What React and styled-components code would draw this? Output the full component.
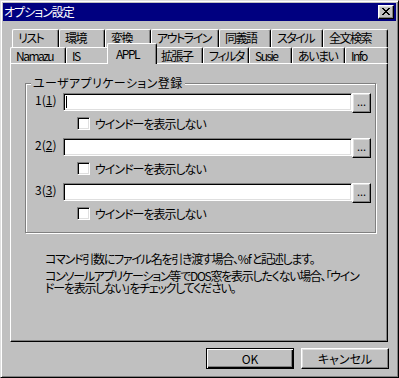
import React from 'react';
import styled, { createGlobalStyle } from 'styled-components';

const GlobalStyle = createGlobalStyle`
  html, body {
    margin: 0;
    padding: 0;
    background: #c0c0c0;
  }
  body {
    font-family: "Noto Sans CJK JP", "Noto Sans", sans-serif;
    font-size: 12px;
    line-height: 13px;
    letter-spacing: -1px;
    color: #000;
    font-feature-settings: "palt";
  }
`;

const Window = styled.div`
  box-sizing: border-box;
  width: 399px;
  height: 378px;
  padding: 2px;
  border: 1px solid;
  border-color: #dfdfdf #000 #000 #dfdfdf;
  box-shadow: inset 1px 1px #fff, inset -1px -1px #808080;
  background: #c0c0c0;
  display: flex;
  flex-direction: column;
`;

const TitleBar = styled.div`
  height: 18px;
  flex: none;
  background: #000080;
  display: flex;
  align-items: center;
  justify-content: space-between;
  padding: 0 2px 0 1px;
`;

const TitleText = styled.span`
  color: #fff;
  line-height: 18px;
`;

const CloseButton = styled.button`
  box-sizing: border-box;
  width: 16px;
  height: 14px;
  padding: 0 0 1px;
  display: flex;
  align-items: center;
  justify-content: center;
  background: #c0c0c0;
  border: 1px solid;
  border-color: #fff #000 #000 #fff;
  box-shadow: inset -1px -1px #808080, inset 1px 1px #dfdfdf;
`;

const Body = styled.div`
  flex: 1;
  display: flex;
  flex-direction: column;
  padding: 8px 8px 0 7px;
`;

const TabRow = styled.div`
  display: flex;
  align-items: flex-end;
  height: ${(p) => p.$h}px;
  margin-left: ${(p) => p.$indent}px;
`;

const Tab = styled.div`
  box-sizing: border-box;
  flex: none;
  position: ${(p) => (p.$active ? 'relative' : 'static')};
  z-index: ${(p) => (p.$active ? 1 : 'auto')};
  width: ${(p) => (p.$active ? p.$w + 4 : p.$w)}px;
  height: ${(p) => (p.$active ? 21 : p.$h)}px;
  margin: ${(p) => (p.$active ? '0 -2px -1px' : '0')};
  padding-left: ${(p) => (p.$active ? 8 : 5)}px;
  padding-bottom: ${(p) => (p.$active ? 2 : p.$lift)}px;
  display: flex;
  align-items: center;
  white-space: nowrap;
  overflow: hidden;
  letter-spacing: -1.5px;
  background: #c0c0c0;
  border-top: 1px solid #fff;
  border-left: 1px solid #fff;
  border-right: 1px solid #000;
  border-radius: 2px 2px 0 0;
  box-shadow: inset -1px 0 #808080;
`;

const Sheet = styled.div`
  box-sizing: border-box;
  height: 279px;
  flex: none;
  border: 1px solid;
  border-color: #fff #000 #000 #fff;
  box-shadow: inset -1px -1px #808080;
  padding: 19px 0 0 14px;
`;

const GroupBox = styled.div`
  position: relative;
  box-sizing: border-box;
  width: 351px;
  border: 1px solid #808080;
  box-shadow: inset 1px 1px #fff, 1px 1px #fff;
  padding: 9px 0 12px 9px;
`;

const GroupCaption = styled.span`
  position: absolute;
  top: -8px;
  left: 5px;
  padding: 0 2px;
  letter-spacing: 0.4px;
  background: #c0c0c0;
`;

const Entry = styled.div`
  & + & {
    margin-top: 8px;
  }
`;

const EntryLine = styled.div`
  display: flex;
  align-items: flex-start;
  height: 20px;
`;

const EntryLabel = styled.span`
  width: 28px;
  flex: none;
  letter-spacing: 0;
`;

const Accel = styled.span`
  text-decoration: underline;
`;

const TextField = styled.div`
  box-sizing: border-box;
  width: 289px;
  height: 18px;
  flex: none;
  display: flex;
  align-items: center;
  padding-left: 1px;
  background: #fff;
  border: 1px solid;
  border-color: #808080 #fff #fff #808080;
  box-shadow: inset 1px 1px #000, inset -1px -1px #dfdfdf;
`;

const Caret = styled.span`
  width: 1px;
  height: 12px;
  margin-left: 1px;
  background: #000;
`;

const BrowseButton = styled.button`
  box-sizing: border-box;
  width: 19px;
  height: 20px;
  flex: none;
  padding: 0 0 4px;
  display: flex;
  align-items: center;
  justify-content: center;
  font: inherit;
  font-size: 11px;
  letter-spacing: 0;
  color: #000;
  background: #c0c0c0;
  border: 1px solid;
  border-color: #fff #000 #000 #fff;
  box-shadow: inset -1px -1px #808080, inset 1px 1px #dfdfdf;
`;

const CheckLine = styled.div`
  display: flex;
  align-items: center;
  gap: 5px;
  margin-top: 4px;
  padding-left: 42px;
`;

const CheckBox = styled.span`
  box-sizing: border-box;
  width: 13px;
  height: 13px;
  flex: none;
  background: #fff;
  border: 1px solid;
  border-color: #808080 #fff #fff #808080;
  box-shadow: inset 1px 1px #000, inset -1px -1px #dfdfdf;
`;

const Notes = styled.div`
  margin: 20px 0 0 20px;
  white-space: nowrap;
  letter-spacing: -1.25px;
`;

const Note = styled.p`
  margin: 0;
  line-height: 12px;
  & + & {
    margin-top: 5px;
  }
`;

const Footer = styled.div`
  display: flex;
  justify-content: flex-end;
  gap: 7px;
  margin: 6px -1px 0 0;
`;

const Button = styled.button`
  box-sizing: border-box;
  width: 88px;
  height: 21px;
  padding: 0;
  font: inherit;
  color: #000;
  background: #c0c0c0;
  border: 1px solid;
  border-color: ${(p) => (p.$default ? '#000' : '#fff #000 #000 #fff')};
  box-shadow: ${(p) =>
    p.$default
      ? 'inset 1px 1px #fff, inset -1px -1px #000, inset -2px -2px #808080'
      : 'inset -1px -1px #808080, inset 1px 1px #dfdfdf'};
`;

const tabRows = [
  {
    h: 18,
    indent: 2,
    lift: 2,
    tabs: [
      { label: 'リスト', w: 47 },
      { label: '環境', w: 46 },
      { label: '変換', w: 46 },
      { label: 'アウトライン', w: 68 },
      { label: '同義語', w: 52 },
      { label: 'スタイル', w: 52 },
      { label: '全文検索', w: 65 },
    ],
  },
  {
    h: 16,
    indent: 0,
    lift: 0,
    tabs: [
      { label: 'Namazu', w: 56 },
      { label: 'IS', w: 43 },
      { label: 'APPL', w: 46, active: true },
      { label: '拡張子', w: 48 },
      { label: 'フィルタ', w: 46 },
      { label: 'Susie', w: 43 },
      { label: 'あいまい', w: 53 },
      { label: 'Info', w: 43 },
    ],
  },
];

const entries = [1, 2, 3];

function CloseGlyph() {
  // classic 8x7 pixel cross
  const rows = ['11000011', '01100110', '00111100', '00011000', '00111100', '01100110', '11000011'];
  return (
    <svg width="8" height="7" viewBox="0 0 8 7" shapeRendering="crispEdges">
      {rows.map((r, y) =>
        r.split('').map((c, x) => (c === '1' ? <rect key={`${x}-${y}`} x={x} y={y} width="1" height="1" fill="#000" /> : null))
      )}
    </svg>
  );
}

export default function App() {
  return (
    <>
      <GlobalStyle />
      <Window>
        <TitleBar>
          <TitleText>オプション設定</TitleText>
          <CloseButton aria-label="閉じる">
            <CloseGlyph />
          </CloseButton>
        </TitleBar>

        <Body>
          {tabRows.map((row, i) => (
            <TabRow key={i} $h={row.h} $indent={row.indent}>
              {row.tabs.map((t) => (
                <Tab key={t.label} $w={t.w} $h={row.h} $lift={row.lift} $active={t.active}>
                  {t.label}
                </Tab>
              ))}
            </TabRow>
          ))}

          <Sheet>
            <GroupBox>
              <GroupCaption>ユーザアプリケーション登録</GroupCaption>
              {entries.map((n) => (
                <Entry key={n}>
                  <EntryLine>
                    <EntryLabel>
                      {n}(<Accel>{n}</Accel>)
                    </EntryLabel>
                    <TextField>{n === 1 && <Caret />}</TextField>
                    <BrowseButton>...</BrowseButton>
                  </EntryLine>
                  <CheckLine>
                    <CheckBox />
                    <span>ウインドーを表示しない</span>
                  </CheckLine>
                </Entry>
              ))}
            </GroupBox>

            <Notes>
              <Note>コマンド引数にファイル名を引き渡す場合、%f と記述します。</Note>
              <Note>
                コンソールアプリケーション等でDOS窓を表示したくない場合、「ウイン
                <br />
                ドーを表示しない」をチェックしてください。
              </Note>
            </Notes>
          </Sheet>

          <Footer>
            <Button $default>OK</Button>
            <Button>キャンセル</Button>
          </Footer>
        </Body>
      </Window>
    </>
  );
}
